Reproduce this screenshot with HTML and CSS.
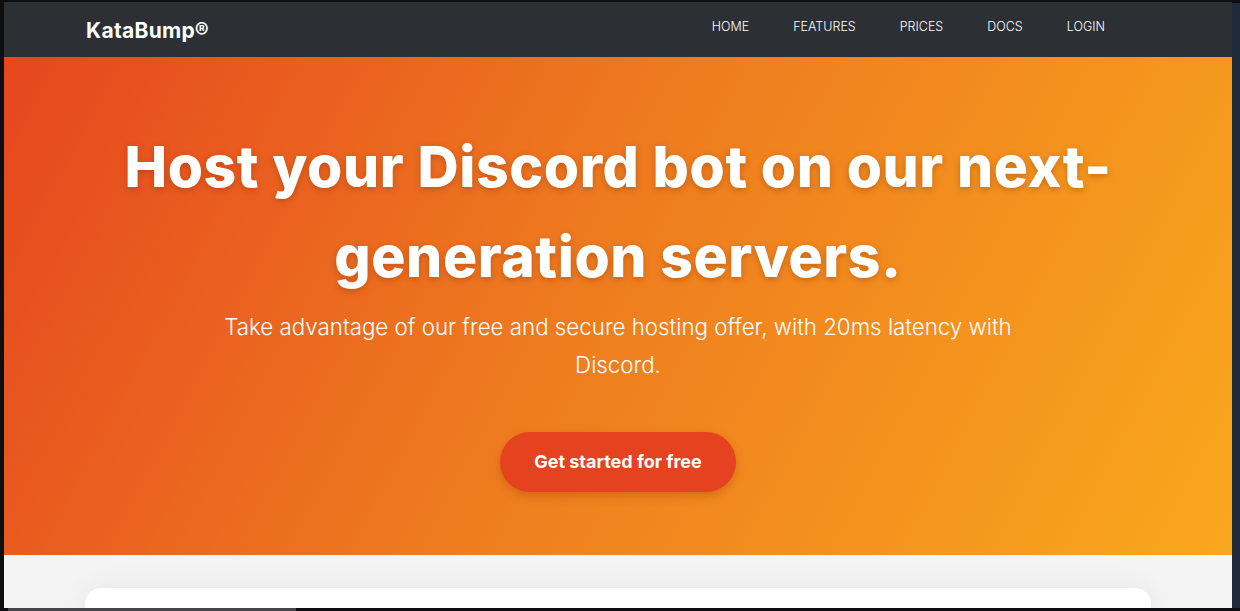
FILE: index.html
```html
<!doctype html>
<html lang="en">
  <head>
    <meta charset="UTF-8" />
    <meta name="viewport" content="width=device-width, initial-scale=1.0" />
    <title>KataBump - Discord bot hosting</title>
    <link rel="stylesheet" href="styles.css">
  </head>
  <body>
    <div class="window">
      <div class="page">
        <nav class="navbar">
          <a class="brand" href="#">KataBump®</a>
          <ul class="nav-links">
            <li><a href="#">HOME</a></li>
            <li><a href="#">FEATURES</a></li>
            <li><a href="#">PRICES</a></li>
            <li><a href="#">DOCS</a></li>
            <li><a href="#">LOGIN</a></li>
          </ul>
        </nav>

        <header class="hero">
          <h1>Host your Discord bot on our next-generation servers.</h1>
          <p>
            Take advantage of our free and secure hosting offer, with 20ms
            latency with Discord.
          </p>
          <a class="cta" href="#">Get started for free</a>
        </header>

        <section class="features">
          <div class="card"></div>
        </section>
      </div>
      <div class="scrollbar"></div>
    </div>
    <div class="hscroll"><div class="hscroll-thumb"></div></div>
  </body>
</html>
```

FILE: styles.css
```css
body {
  margin: 0;
  padding: 0;
  background-color: #0e0e11;
  font-family: Inter, "Noto Sans", sans-serif;
  overflow: hidden;
}
.window {
  display: flex;
  height: 606px;
  padding: 2px 0 0 4px;
}
.page {
  flex: 1;
  overflow: hidden;
  background: #f4f4f4;
}
.scrollbar {
  width: 8px;
  margin-top: 1px;
  background-color: #1f2a3b;
}
.hscroll {
  height: 3px;
  padding-left: 8px;
}
.hscroll-thumb {
  width: 288px;
  height: 3px;
  background-color: #46464a;
}

/* navbar */
.navbar {
  height: 55px;
  display: flex;
  align-items: center;
  justify-content: space-between;
  padding: 0 105px 0 82px;
  background-color: #2c2f34;
}
.brand {
  color: white;
  font-size: 21px;
  font-weight: 700;
  text-decoration: none;
  letter-spacing: 0.3px;
  margin-top: 1px;
}
.nav-links {
  display: flex;
  list-style: none;
  margin: 0 0 6px;
  padding: 0;
}
.nav-links a {
  display: block;
  padding: 0 22px;
  color: white;
  font-size: 12.5px;
  font-weight: 300;
  text-decoration: none;
}

/* hero */
.hero {
  height: 498px;
  box-sizing: border-box;
  padding-top: 65px;
  text-align: center;
  color: white;
  background: linear-gradient(118deg, #e6461f 0%, #ee7a1f 45%, #f9a81d 100%);
}
.hero h1 {
  max-width: 1020px;
  margin: 0 auto;
  font-size: 57px;
  font-weight: 800;
  line-height: 90px;
  letter-spacing: 0.6px;
  text-shadow: 0 2px 6px rgba(120, 40, 0, 0.35);
}
.hero p {
  max-width: 820px;
  margin: 6px auto 0;
  font-size: 22.3px;
  font-weight: 300;
  line-height: 38px;
}
.cta {
  display: inline-block;
  margin-top: 48px;
  width: 236px;
  height: 60px;
  line-height: 60px;
  border-radius: 30px;
  background-color: #e5421f;
  color: white;
  font-size: 18px;
  font-weight: 700;
  text-decoration: none;
  box-shadow: 0 4px 10px rgba(150, 50, 0, 0.3);
}

/* features */
.features {
  padding: 33px 81px 0;
}
.card {
  height: 120px;
  background: white;
  border-radius: 16px;
  box-shadow: 0 0 30px rgba(0, 0, 0, 0.06);
}
```
